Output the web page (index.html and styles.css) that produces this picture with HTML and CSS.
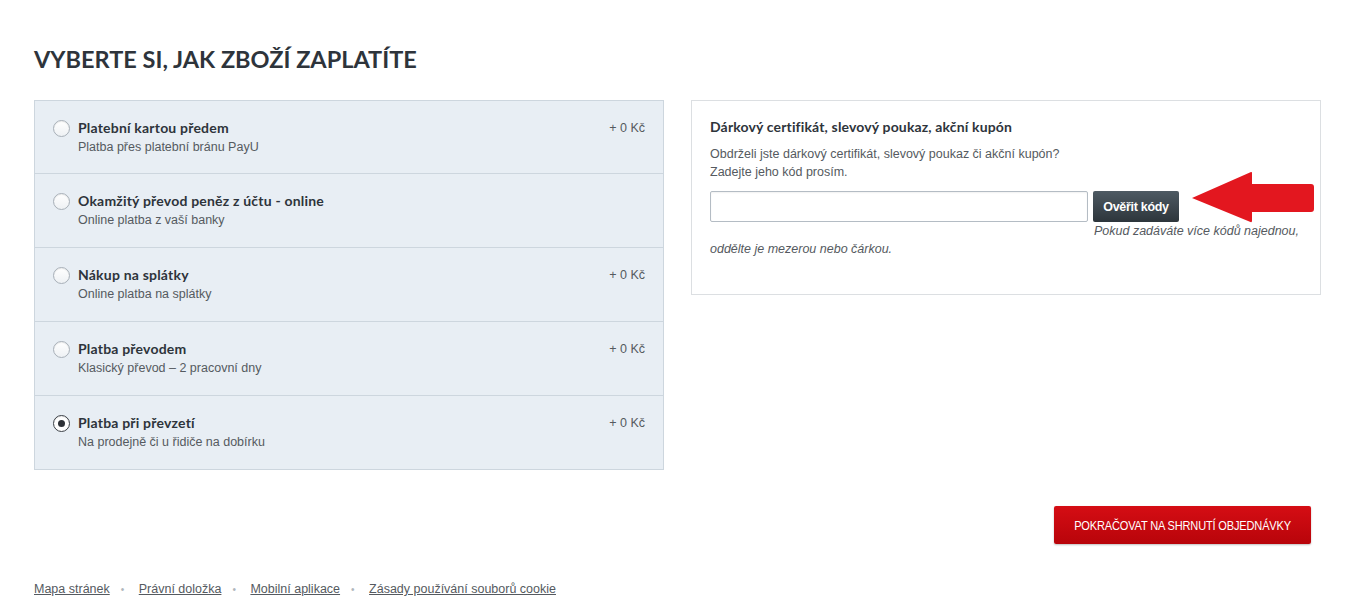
FILE: index.html
```html
<!DOCTYPE html>
<html lang="cs">
<head>
<meta charset="utf-8">
<title>Platba</title>
<link rel="stylesheet" href="styles.css">
</head>
<body>
<div class="page">
  <h1 class="title">VYBERTE SI, JAK ZBOŽÍ ZAPLATÍTE</h1>
  <div class="main">
    <div class="methods">
      <div class="method">
        <span class="radio"></span>
        <div class="info">
          <div class="m-title">Platební kartou předem</div>
          <div class="m-sub">Platba přes platební bránu PayU</div>
        </div>
        <div class="price">+ 0 Kč</div>
      </div>
      <div class="method">
        <span class="radio"></span>
        <div class="info">
          <div class="m-title">Okamžitý převod peněz z účtu - online</div>
          <div class="m-sub">Online platba z vaší banky</div>
        </div>
        <div class="price"></div>
      </div>
      <div class="method">
        <span class="radio"></span>
        <div class="info">
          <div class="m-title">Nákup na splátky</div>
          <div class="m-sub">Online platba na splátky</div>
        </div>
        <div class="price">+ 0 Kč</div>
      </div>
      <div class="method">
        <span class="radio"></span>
        <div class="info">
          <div class="m-title">Platba převodem</div>
          <div class="m-sub">Klasický převod – 2 pracovní dny</div>
        </div>
        <div class="price">+ 0 Kč</div>
      </div>
      <div class="method">
        <span class="radio checked"></span>
        <div class="info">
          <div class="m-title">Platba při převzetí</div>
          <div class="m-sub">Na prodejně či u řidiče na dobírku</div>
        </div>
        <div class="price">+ 0 Kč</div>
      </div>
    </div>
    <div class="coupon">
      <div class="c-title">Dárkový certifikát, slevový poukaz, akční kupón</div>
      <div class="c-text">Obdrželi jste dárkový certifikát, slevový poukaz či akční kupón?<br>Zadejte jeho kód prosím.</div>
      <div class="c-form">
        <input class="c-input" type="text">
        <button class="c-btn">Ověřit kódy</button>
      </div>
      <div class="c-note">Pokud zadáváte více kódů najednou,<br><span class="c-note-2">oddělte je mezerou nebo čárkou.</span></div>
      <svg class="arrow" width="126" height="52" viewBox="0 0 126 52">
        <path d="M2 27 L61 1 Q62 0.5 62 2 L62 13 L121 13 Q124 13 124 16 L124 38 Q124 41 121 41 L62 41 L62 50 Q62 51.5 60.5 51 Z" fill="#e3171f"/>
      </svg>
    </div>
  </div>
  <div class="actions">
    <button class="continue"><span class="continue-label">POKRAČOVAT NA SHRNUTÍ OBJEDNÁVKY</span></button>
  </div>
  <div class="footer">
    <a href="#">Mapa stránek</a><span class="dot">•</span>
    <a href="#">Právní doložka</a><span class="dot">•</span>
    <a href="#">Mobilní aplikace</a><span class="dot">•</span>
    <a href="#">Zásady používání souborů cookie</a>
  </div>
</div>
</body>
</html>
```

FILE: styles.css
```css
* { box-sizing: border-box; }
html, body { margin: 0; padding: 0; background: #fff; }
body { font-family: "Liberation Sans", Arial, sans-serif; color: #333; }

.page {
  width: 1347px;
  padding: 0 0 0 34px;
}

.title {
  margin: 0;
  padding-top: 44px;
  height: 100px;
  font-family: Lato, "Noto Sans", sans-serif;
  font-weight: 700;
  font-size: 23.5px;
  line-height: 30px;
  color: #2e343b;
}

.main {
  display: flex;
  align-items: flex-start;
  gap: 27px;
}

.methods {
  width: 630px;
  background: #e8eef4;
  border: 1px solid #cdd6de;
}

.method {
  display: flex;
  align-items: flex-start;
  height: 74px;
  padding: 18px 18px 0 18px;
  border-bottom: 1px solid #cdd6de;
}
.method:first-child { height: 73px; padding-top: 18px; }
.method:last-child { border-bottom: none; height: 73px; }

.radio {
  flex: none;
  width: 17px;
  height: 17px;
  margin-top: 1px;
  border-radius: 50%;
  border: 1px solid #a8b0b8;
  background: linear-gradient(#fff, #eef1f4);
  box-shadow: inset 0 1px 1px rgba(0,0,0,0.08);
  position: relative;
}
.radio.checked {
  border-color: #3a3f45;
  background: #fff;
}
.radio.checked::after {
  content: "";
  position: absolute;
  left: 4px; top: 4px;
  width: 7px; height: 7px;
  border-radius: 50%;
  background: #2d3137;
}

.info { flex: 1; margin-left: 8px; }

.m-title {
  font-family: Lato, "Noto Sans", sans-serif;
  font-weight: 700;
  font-size: 14px;
  letter-spacing: 0.2px;
  line-height: 18px;
  color: #2e343b;
}
.m-sub {
  margin-top: 1px;
  font-size: 12.5px;
  line-height: 18px;
  color: #555a60;
}

.price {
  font-size: 12.5px;
  line-height: 18px;
  color: #555a60;
  white-space: nowrap;
}

.coupon {
  position: relative;
  width: 630px;
  height: 195px;
  border: 1px solid #dcdfe2;
  background: #fff;
  padding: 17px 18px 0 18px;
}

.c-title {
  font-family: Lato, "Noto Sans", sans-serif;
  font-weight: 700;
  font-size: 14px;
  letter-spacing: 0.15px;
  line-height: 18px;
  color: #2e343b;
}
.c-text {
  margin-top: 9px;
  font-size: 12.5px;
  line-height: 18px;
  color: #555a60;
}
.c-form {
  display: flex;
  gap: 5px;
  margin-top: 10px;
}
.c-input {
  width: 378px;
  height: 31px;
  border: 1px solid #b4bcc4;
  border-radius: 2px;
  box-shadow: inset 0 1px 2px rgba(0,0,0,0.06);
  margin: 0;
}
.c-btn {
  width: 86px;
  height: 31px;
  margin: 0;
  border: none;
  border-radius: 2px;
  background: linear-gradient(#4e5a63, #2d353b);
  color: #fff;
  font-family: "Liberation Sans", Arial, sans-serif;
  font-weight: 700;
  font-size: 12.5px;
  letter-spacing: -0.3px;
}
.c-note {
  font-size: 12.5px;
  line-height: 18px;
  font-style: italic;
  color: #555a60;
  text-align: right;
  padding-right: 3px;
}
.c-note-2 { display: block; text-align: left; }

.arrow {
  position: absolute;
  left: 498px;
  top: 70px;
}

.actions {
  display: flex;
  justify-content: flex-end;
  width: 1277px;
  padding-top: 36px;
}
.continue {
  width: 257px;
  height: 38px;
  margin: 0;
  padding: 0;
  border: none;
  border-radius: 2px;
  background: linear-gradient(#d50d14, #b8040a);
  box-shadow: 0 1px 2px rgba(0,0,0,0.25);
  color: #fff;
  font-family: "Liberation Sans", Arial, sans-serif;
  font-size: 13px;
  white-space: nowrap;
  display: flex;
  align-items: center;
  justify-content: center;
}
.continue-label {
  display: inline-block;
  transform: scaleX(0.85);
  letter-spacing: -0.2px;
}

.footer {
  padding-top: 36px;
  font-size: 12.5px;
  line-height: 18px;
  color: #555a60;
}
.footer a { color: #555a60; text-decoration: underline; }
.dot { color: #b0b6bc; margin: 0 11px; font-size: 10px; }
```
